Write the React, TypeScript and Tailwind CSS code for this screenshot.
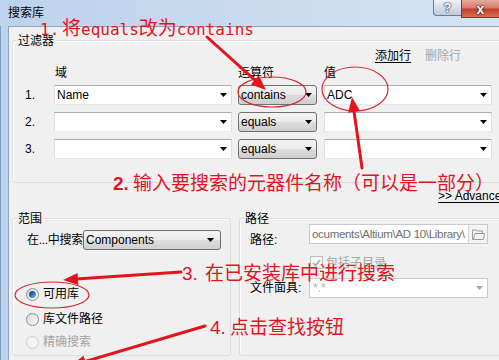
import React from "react";

const RED = "#e3141d";

function Tri({ color = "#000" }: { color?: string }) {
  return (
    <svg width="7" height="4" viewBox="0 0 7 4">
      <path d="M0 0H7L3.5 4Z" fill={color} />
    </svg>
  );
}

function Arrow({ x1, y1, x2, y2, L = 15, W = 6, w = 3 }: { x1: number; y1: number; x2: number; y2: number; L?: number; W?: number; w?: number }) {
  const dx = x2 - x1;
  const dy = y2 - y1;
  const len = Math.hypot(dx, dy);
  const ux = dx / len;
  const uy = dy / len;
  const bx = x2 - ux * L;
  const by = y2 - uy * L;
  const nx = -uy;
  const ny = ux;
  return (
    <g>
      <line x1={x1} y1={y1} x2={bx + ux * 2} y2={by + uy * 2} stroke={RED} strokeWidth={w} strokeLinecap="round" />
      <polygon points={`${x2},${y2} ${bx + nx * W},${by + ny * W} ${bx - nx * W},${by - ny * W}`} fill={RED} />
    </g>
  );
}

function EditCombo({ className, text }: { className: string; text?: string }) {
  return (
    <div className={`flex h-[20px] items-center border border-b-[#e3e9ef] border-l-[#dbdfe6] border-r-[#dbdfe6] border-t-[#abadb3] bg-white pl-[2px] pr-[4px] ${className}`}>
      <span className="flex-1">{text}</span>
      <Tri />
    </div>
  );
}

function BtnCombo({ className, text, pr = "pr-[4px]" }: { className: string; text: string; pr?: string }) {
  return (
    <div className={`flex h-[20px] items-center rounded-[3px] border border-[#707070] bg-[linear-gradient(#f3f3f3_0%,#ebebeb_50%,#dddddd_51%,#cfcfcf_100%)] pl-[2px] ${pr} ${className}`}>
      <span className="flex-1">{text}</span>
      <Tri />
    </div>
  );
}

function Radio({ checked, disabled }: { checked?: boolean; disabled?: boolean }) {
  return (
    <div
      className={
        disabled
          ? "flex h-[13px] w-[13px] items-center justify-center rounded-full border border-[#cfcfcf] bg-[#f4f4f4]"
          : "flex h-[13px] w-[13px] items-center justify-center rounded-full border border-[#8c8e8f] bg-gradient-to-br from-[#d6d6d6] to-[#fbfbfb]"
      }
    >
      {checked && <div className="h-[7px] w-[7px] rounded-full bg-gradient-to-br from-[#0b3876] via-[#2a6fc0] to-[#7cc4f2]" />}
    </div>
  );
}

export default function App() {
  return (
    <div className="relative h-[360px] w-[499px] overflow-hidden bg-gradient-to-r from-[#bcd3eb] via-[#c8dbef] to-[#d4e4f4] font-['Liberation_Sans','Noto_Sans_CJK_SC',sans-serif] text-[12px] leading-[14px] text-black">
      {/* title bar */}
      <div className="flex h-[26px]">
        <div className="pl-[8px] pt-[6px]">搜索库</div>
        <div className="ml-auto flex items-start">
          <div className="flex h-[16px] w-[28px] items-center justify-center rounded-bl-[4px] border border-r-0 border-t-0 border-[#6b7c94] bg-gradient-to-b from-[#eef2f7] to-[#bfcbdb] text-[13px] font-bold text-white [text-shadow:0_0_1px_#303a48,0_0_1px_#303a48,0_0_2px_#303a48]">
            ?
          </div>
          <div className="flex h-[18px] w-[38px] items-center justify-center border-b border-l border-[#7a3a30] bg-[linear-gradient(#e8ab9c_0%,#d4806c_45%,#c4402c_55%,#d5704f_100%)] text-[14px] font-bold text-white [text-shadow:0_0_1px_#3a1410,0_0_1px_#3a1410,0_0_2px_#3a1410]">
            x
          </div>
        </div>
      </div>

      <div className="flex h-[334px]">
        <div className="w-[8px] border-l border-[#7e9dc0]" />
        <div className="h-full flex-1 overflow-hidden border-l border-t border-[#8fa5bf] bg-[#f0f0f0]">
          {/* 过滤器 group */}
          <div className="ml-[3px] mt-[13px] w-[520px] rounded-[3px] border border-[#d5dfe5] pb-[23px] shadow-[inset_1px_1px_0_#ffffff]">
            <div className="-mt-[7px] ml-[4px] w-fit bg-[#f0f0f0] px-[1px]">过滤器</div>
            <div className="mt-[1px] flex gap-[14px] pl-[362px]">
              <span className="underline underline-offset-[2px]">添加行</span>
              <span className="text-[#a6a6a6]">删除行</span>
            </div>
            <div className="mt-[3px] flex">
              <div className="w-[41px]" />
              <div className="w-[178px] pl-[1px]">域</div>
              <div className="ml-[6px] w-[79px]">运算符</div>
              <div className="ml-[7px]">值</div>
            </div>
            {[
              { n: "1.", f: "Name", op: "contains", v: "ADC", mt: "mt-[5px]" },
              { n: "2.", f: "", op: "equals", v: "", mt: "mt-[7px]" },
              { n: "3.", f: "", op: "equals", v: "", mt: "mt-[7px]" },
            ].map((r) => (
              <div key={r.n} className={`flex h-[20px] items-center ${r.mt}`}>
                <div className="w-[41px] pl-[12px]">{r.n}</div>
                <EditCombo className="w-[178px]" text={r.f} />
                <BtnCombo className="ml-[6px] w-[79px]" text={r.op} />
                <EditCombo className="ml-[7px] w-[168px]" text={r.v} />
              </div>
            ))}
          </div>

          <div className="ml-[429px] mt-[6px] whitespace-nowrap underline underline-offset-[2px]">&gt;&gt; Advanced</div>

          <div className="mt-[15px] flex">
            {/* 范围 */}
            <div className="ml-[3px] h-[138px] w-[219px] shrink-0 rounded-[3px] border border-[#d5dfe5] shadow-[inset_1px_1px_0_#ffffff]">
              <div className="-mt-[7px] ml-[4px] w-fit bg-[#f0f0f0] px-[1px]">范围</div>
              <div className="mt-[4px] flex h-[20px] items-center pl-[14px]">
                <div className="w-[56px] whitespace-nowrap tracking-[-0.3px]">在...中搜索</div>
                <BtnCombo className="w-[138px]" text="Components" pr="pr-[6px]" />
              </div>
              <div className="mt-[37px] flex h-[14px] items-center gap-[4px] pl-[13px]">
                <Radio checked />
                <span>可用库</span>
              </div>
              <div className="mt-[11px] flex h-[14px] items-center gap-[4px] pl-[13px]">
                <Radio />
                <span>库文件路径</span>
              </div>
              <div className="mt-[9px] flex h-[14px] items-center gap-[4px] pl-[13px]">
                <Radio disabled />
                <span className="text-[#a3a3a3]">精确搜索</span>
              </div>
            </div>

            {/* 路径 */}
            <div className="ml-[8px] h-[138px] w-[300px] shrink-0 rounded-[3px] border border-[#d5dfe5] shadow-[inset_1px_1px_0_#ffffff]">
              <div className="-mt-[7px] ml-[4px] w-fit bg-[#f0f0f0] px-[1px]">路径</div>
              <div className="-mt-[2px] flex items-start">
                <div className="w-[69px] pl-[10px] pt-[9px]">路径:</div>
                <div className="flex h-[20px] w-[179px] items-center border border-[#c9c9c9] bg-white">
                  <div className="flex flex-1 justify-start overflow-hidden whitespace-nowrap pl-[2px] text-[11.5px] tracking-[-0.3px] text-[#6d6d6d]">
                    <span>ocuments\Altium\AD 10\Library\</span>
                  </div>
                  <div className="flex h-[18px] w-[19px] items-center justify-center border-l border-[#d4d4d4] bg-[#f4f4f4]">
                    <svg width="13" height="11" viewBox="0 0 13 11">
                      <path d="M0.5 2.5V10.5H11.5L12.5 4.5H3L1.5 10" fill="none" stroke="#9a9a9a" />
                      <path d="M0.5 2.5V1H4L5 2H10.5V4.5" fill="none" stroke="#9a9a9a" />
                    </svg>
                  </div>
                </div>
              </div>
              <div className="mt-[9px] flex h-[13px] items-center gap-[3px] pl-[70px]">
                <div className="flex h-[13px] w-[13px] items-center justify-center border border-[#bdbdbd] bg-[#f6f6f6]">
                  <svg width="9" height="8" viewBox="0 0 9 8">
                    <path d="M1 4L3.5 6.5L8 1" fill="none" stroke="#a8a8a8" strokeWidth="1.6" />
                  </svg>
                </div>
                <span className="text-[#a6a6a6]">包括子目录</span>
              </div>
              <div className="mt-[9px] flex h-[20px] items-center">
                <div className="w-[69px] pl-[10px]">文件面具:</div>
                <div className="flex h-[20px] w-[179px] items-center border border-[#cbcbcb] bg-white pl-[3px] pr-[4px]">
                  <span className="flex-1 text-[#b0b0b0]">*.*</span>
                  <Tri color="#a8a8a8" />
                </div>
              </div>
            </div>
          </div>
        </div>
      </div>

      {/* annotations */}
      <svg className="pointer-events-none absolute left-0 top-0" width="499" height="360" viewBox="0 0 499 360">
        <ellipse cx="272" cy="92" rx="34" ry="15" fill="none" stroke="#d62a30" strokeWidth="1.2" />
        <ellipse cx="355" cy="89" rx="33" ry="22" fill="none" stroke="#d62a30" strokeWidth="1.2" />
        <ellipse cx="52" cy="295" rx="37" ry="13" fill="none" stroke="#d62a30" strokeWidth="1.2" />
        <Arrow x1={207} y1={37} x2={266} y2={90} />
        <Arrow x1={362} y1={168} x2={352} y2={97} />
        <Arrow x1={181} y1={272} x2={63} y2={280} />
        <Arrow x1={205} y1={326} x2={70} y2={366} L={16} />
      </svg>

      <div className="pointer-events-none absolute left-[40px] top-[17px] whitespace-nowrap font-['Noto_Sans_CJK_SC',sans-serif] text-[19px] leading-[19px] text-[#e3141d]">
        <span className="inline-block w-[22px] font-['DejaVu_Sans_Mono',monospace] text-[16px]">1.</span>
        将<span className="font-['DejaVu_Sans_Mono',monospace] text-[16px]">equals</span>改为<span className="font-['DejaVu_Sans_Mono',monospace] text-[16px]">contains</span>
      </div>
      <div className="pointer-events-none absolute left-[113px] top-[172px] whitespace-nowrap font-['Noto_Sans_CJK_SC',sans-serif] text-[19px] leading-[19px] text-[#e3141d]">
        <span className="inline-block w-[20px] font-['Liberation_Sans',sans-serif] font-bold">2.</span>
        输入要搜索的元器件名称（可以是一部分）
      </div>
      <div className="pointer-events-none absolute left-[182px] top-[262px] whitespace-nowrap font-['Noto_Sans_CJK_SC',sans-serif] text-[19px] leading-[19px] text-[#e3141d]">
        <span className="inline-block w-[23px] font-['Liberation_Sans',sans-serif]">3.</span>
        在已安装库中进行搜索
      </div>
      <div className="pointer-events-none absolute left-[210px] top-[316px] whitespace-nowrap font-['Noto_Sans_CJK_SC',sans-serif] text-[19px] leading-[19px] text-[#e3141d]">
        <span className="inline-block w-[20px] font-['Liberation_Sans',sans-serif]">4.</span>
        点击查找按钮
      </div>
    </div>
  );
}
